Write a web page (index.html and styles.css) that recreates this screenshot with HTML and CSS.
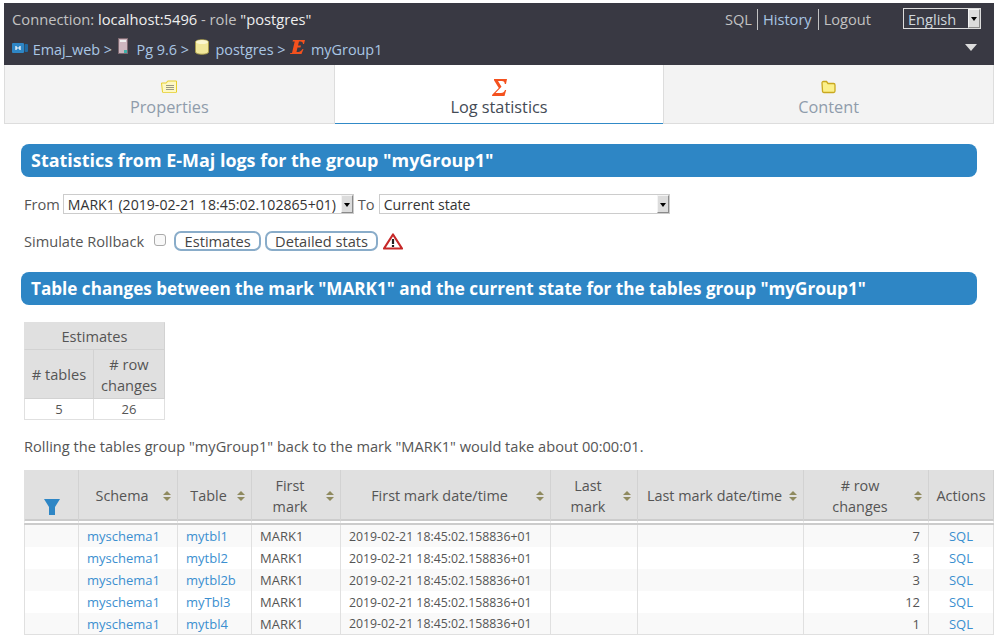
FILE: index.html
```html
<!doctype html>
<html>
    <head>
        <meta charset="utf-8" />
        <meta name="viewport" content="width=device-width, initial-scale=1" />
        <title>Emaj_web - Log statistics</title>
        <link rel="stylesheet" href="styles.css">
    </head>
    <body>
        <header class="topbar">
            <div class="topbar-row">
                <div class="connection">Connection: <span class="light">localhost:5496</span> - role <span class="light">"postgres"</span></div>
                <nav class="toplinks">
                    <a href="#">SQL</a>
                    <a href="#" class="blue">History</a>
                    <a href="#">Logout</a>
                </nav>
                <div class="select lang">
                    <select><option>English</option></select>
                    <span class="arrow"></span>
                </div>
            </div>
            <div class="crumbs">
                <svg class="cam" width="16" height="10" viewBox="0 0 16 10">
                    <rect x="0" y="0" width="12" height="10" rx="1" fill="#2e86c5" />
                    <rect x="12.500" y="1" width="3.500" height="8" rx="1" fill="#1f6aa3" />
                    <path d="M4 3v4M8 3v4M4.500 5h3" stroke="#fff" stroke-width="1.200" fill="none" />
                </svg>
                <a href="#">Emaj_web</a> &gt;
                <svg class="srv" width="11" height="17" viewBox="0 0 11 17">
                    <rect x="0.500" y="0.500" width="9" height="15" fill="#cdb6bf" stroke="#7d6870" />
                    <rect x="2" y="2" width="6" height="2" fill="#eee" />
                    <rect x="6" y="12" width="3" height="3" fill="#3fb0a8" />
                </svg>
                <a href="#">Pg 9.6</a> &gt;
                <svg class="db" width="14" height="16" viewBox="0 0 14 16">
                    <path d="M0.500 3c0-3 13-3 13 0v10c0 3-13 3-13 0z" fill="#f1e79a" stroke="#a69a4c" />
                    <ellipse cx="7" cy="3" rx="6" ry="2" fill="#fbf6cf" />
                </svg>
                <a href="#">postgres</a> &gt;
                <svg class="emaj" width="15" height="14" viewBox="0 0 15 14">
                    <path d="M3 0h12l-1 4h-1c0-2-1-2.500-4-2.500l-1 4h3l-.5 2h-3l-1 4.500c3 0 4.500-.5 6-3h1l-2 5H0l.3-1h1.700l2.700-11.500H2.500z" fill="#f4511e" />
                </svg>
                <a href="#">myGroup1</a>
                <span class="collapse"></span>
            </div>
        </header>

        <div class="tabs">
            <a href="#" class="tab">
                <svg width="16" height="13" viewBox="0 0 16 13">
                    <path d="M0.500 2.500h5l1-2h9v11l-1 1-1-1-1 1-1-1-1 1-1-1-1 1-1-1-1 1-1-1-1 1-1-1-1 1-1-1z" fill="#fdf8c4" stroke="#e6cf2a" />
                    <path d="M5 5h8M5 7h8M5 9h8" stroke="#9b9a84" />
                </svg>
                <span>Properties</span>
            </a>
            <a href="#" class="tab active">
                <svg width="15" height="17" viewBox="0 0 15 17">
                    <path d="M2 0h13l-1 5h-1.200c-.1-2-1-3-3-3H6l3.500 5.800L3.500 14H9c2 0 3.300-1 4-3h1.200L12.500 17H0l.2-1.200L6.800 9 2 1.200z" fill="#f4511e" />
                </svg>
                <span>Log statistics</span>
            </a>
            <a href="#" class="tab">
                <svg width="15" height="13" viewBox="0 0 15 13">
                    <path d="M1 2.500c0-1 .5-1.500 1.500-1.500h3l1.500 2h5.500c1 0 1.500.5 1.500 1.500v6c0 1-.5 1.500-1.500 1.500h-9.500c-1 0-1.500-.5-1.500-1.500z" fill="#fbf08a" stroke="#c9a81f" stroke-width="1.300" />
                </svg>
                <span>Content</span>
            </a>
        </div>

        <main class="content">
            <h2 class="title first-title">Statistics from E-Maj logs for the group "myGroup1"</h2>

            <form class="filters">
                <div class="filter-row">
                    <label>From</label>
                    <div class="select from">
                        <select><option>MARK1 (2019-02-21 18:45:02.102865+01)</option></select>
                        <span class="arrow"></span>
                    </div>
                    <label>To</label>
                    <div class="select to">
                        <select><option>Current state</option></select>
                        <span class="arrow"></span>
                    </div>
                </div>
                <div class="filter-row second">
                    <label>Simulate Rollback</label>
                    <input type="checkbox" class="check" />
                    <button type="button" class="btn estimate-btn">Estimates</button>
                    <button type="button" class="btn">Detailed stats</button>
                    <svg class="warn" width="20" height="17" viewBox="0 0 20 17">
                        <path d="M10 1.500L1 15.500h18z" fill="#fff" stroke="#c62828" stroke-width="2.200" stroke-linejoin="round" />
                        <path d="M10 6v5" stroke="#222" stroke-width="2.200" />
                        <rect x="8.900" y="12" width="2.200" height="2" fill="#222" />
                    </svg>
                </div>
            </form>

            <h2 class="title second-title">Table changes between the mark "MARK1" and the current state for the tables group "myGroup1"</h2>

            <table class="grid estimates">
                <thead>
                    <tr><th colspan="2" class="est-head">Estimates</th></tr>
                    <tr><th class="c-tables"># tables</th><th class="c-rows"># row changes</th></tr>
                </thead>
                <tbody>
                    <tr><td class="center">5</td><td class="center">26</td></tr>
                </tbody>
            </table>

            <p class="duration">Rolling the tables group "myGroup1" back to the mark "MARK1" would take about 00:00:01.</p>

            <table class="grid stats">
                <colgroup>
                    <col class="col-filter">
                    <col class="col-schema">
                    <col class="col-table">
                    <col class="col-mark">
                    <col class="col-date">
                    <col class="col-last">
                    <col class="col-lastdate">
                    <col class="col-changes">
                    <col class="col-actions">
                </colgroup>
                <thead>
                    <tr>
                        <th class="filter-cell">
                            <svg width="16" height="16" viewBox="0 0 16 16"><path d="M0 0h16l-5 8v8H5V8z" fill="#2e86c5" /></svg>
                        </th>
                        <th class="sort">Schema</th>
                        <th class="sort">Table</th>
                        <th class="sort">First<br>mark</th>
                        <th class="sort">First mark date/time</th>
                        <th class="sort">Last<br>mark</th>
                        <th class="sort">Last mark date/time</th>
                        <th class="sort"># row<br>changes</th>
                        <th>Actions</th>
                    </tr>
                </thead>
                <tbody>
                    <tr><td></td><td><a href="#">myschema1</a></td><td><a href="#">mytbl1</a></td><td>MARK1</td><td class="date">2019-02-21 18:45:02.158836+01</td><td></td><td></td><td class="num">7</td><td class="center"><a href="#">SQL</a></td></tr>
                    <tr><td></td><td><a href="#">myschema1</a></td><td><a href="#">mytbl2</a></td><td>MARK1</td><td class="date">2019-02-21 18:45:02.158836+01</td><td></td><td></td><td class="num">3</td><td class="center"><a href="#">SQL</a></td></tr>
                    <tr><td></td><td><a href="#">myschema1</a></td><td><a href="#">mytbl2b</a></td><td>MARK1</td><td class="date">2019-02-21 18:45:02.158836+01</td><td></td><td></td><td class="num">3</td><td class="center"><a href="#">SQL</a></td></tr>
                    <tr><td></td><td><a href="#">myschema1</a></td><td><a href="#">myTbl3</a></td><td>MARK1</td><td class="date">2019-02-21 18:45:02.158836+01</td><td></td><td></td><td class="num">12</td><td class="center"><a href="#">SQL</a></td></tr>
                    <tr><td></td><td><a href="#">myschema1</a></td><td><a href="#">mytbl4</a></td><td>MARK1</td><td class="date">2019-02-21 18:45:02.158836+01</td><td></td><td></td><td class="num">1</td><td class="center"><a href="#">SQL</a></td></tr>
                </tbody>
            </table>
        </main>
    </body>
</html>
```

FILE: styles.css
```css
html {
    font-family: "Open Sans", "Liberation Sans", sans-serif;
    font-size: 14.62px;
    color: #555;
}

body {
    margin: 3px 4px 0;
    overflow: hidden;
}

a {
    color: #3b8fd0;
    text-decoration: none;
}

/* top bar */
.topbar {
    background: #393943;
    height: 62px;
    color: #c2c2c2;
    padding: 4px 13px 0 8px;
    box-sizing: border-box;
}

.topbar-row {
    display: flex;
    align-items: center;
    height: 24px;
}

.light {
    color: #eee;
}

.connection {
    flex: 1;
    font-size: 14.72px;
}

.toplinks {
    display: flex;
    margin-right: 26px;
}

.toplinks a {
    color: #c2c2c2;
    padding: 0 6px 0 5px;
    line-height: 21px;
    border-left: 1px solid #c2c2c2;
}

.toplinks a:first-child {
    border-left: none;
    padding-right: 5px;
}

.toplinks a.blue {
    color: #a9c6e4;
}

.crumbs {
    position: relative;
    margin-top: 7px;
    line-height: 24px;
    font-size: 14.4px;
    color: #a9c6e4;
    white-space: nowrap;
}

.crumbs a {
    color: #a9c6e4;
}

.crumbs svg {
    margin: 0 2px;
}

.crumbs .cam {
    margin-left: 0;
    margin-right: 1px;
    vertical-align: 2px;
}

.crumbs .srv {
    margin-right: 4px;
    vertical-align: 0;
}

.crumbs .db {
    margin-right: 3px;
}

.crumbs .emaj {
    margin-left: 1px;
    vertical-align: 1px;
}

.collapse {
    position: absolute;
    top: 6px;
    right: 4px;
    border-left: 6px solid transparent;
    border-right: 6px solid transparent;
    border-top: 7px solid #ddd;
}

/* selects are redrawn with a small 3d arrow button */
.select {
    position: relative;
    display: inline-block;
}

.select select {
    appearance: none;
    -webkit-appearance: none;
    display: block;
    width: 100%;
    height: 20px;
    box-sizing: border-box;
    border: 1px solid #ccc;
    border-radius: 0;
    background: #fff;
    padding: 0 0 0 4px;
    font: inherit;
    font-size: 14.1px;
    color: #333;
}

.arrow {
    position: absolute;
    top: 1px;
    right: 1px;
    bottom: 1px;
    width: 10px;
    background: #dcdcdc;
    border: 1px solid;
    border-color: #f4f4f4 #8a8a8a #8a8a8a #f4f4f4;
}

.arrow::after {
    content: "";
    position: absolute;
    top: 7px;
    left: 2px;
    border-left: 3px solid transparent;
    border-right: 3px solid transparent;
    border-top: 4px solid #000;
}

.lang {
    width: 78px;
    margin-top: -2px;
}

.lang select {
    height: 21px;
    background: #393943;
    color: #cfd6dc;
    border-color: #ddd;
    font-size: 14.6px;
}

/* tabs */
.tabs {
    display: flex;
    height: 59px;
}

.tab {
    flex: 1;
    display: flex;
    flex-direction: column;
    align-items: center;
    padding-top: 15px;
    box-sizing: border-box;
    background: #f3f3f3;
    color: #8f9cab;
    font-size: 16.3px;
    border: 1px solid #ddd;
    border-top: none;
}

.tab span {
    line-height: 24px;
    margin-top: 1px;
}

.tab svg {
    height: 14px;
}

.tab.active svg {
    height: 17px;
    margin-bottom: -2px;
    margin-top: -1px;
}

.tab.active {
    background: #fff;
    color: #444b55;
    border-left: none;
    border-right: none;
    border-bottom: 1px solid #318ac7;
}

/* page content */
.content {
    padding: 20px 17px 0;
}

.title {
    margin: 0;
    background: #2e86c5;
    color: #fff;
    border-radius: 8px;
    font-size: 17.12px;
    line-height: 33px;
    height: 33px;
    padding-left: 10px;
}

.first-title {
    font-size: 17.96px;
}

.second-title {
    margin-top: 21px;
}

.filters {
    padding: 17px 3px 0;
}

.filter-row {
    display: flex;
    align-items: center;
    height: 20px;
    gap: 4px;
}

.filter-row.second {
    margin-top: 17px;
}

.from {
    width: 291px;
    margin-left: -1px;
}

.to {
    width: 291px;
}

.check {
    appearance: none;
    -webkit-appearance: none;
    box-sizing: border-box;
    margin: 0 4px 2px 6px;
    width: 12px;
    height: 12px;
    border: 1px solid #aaa;
    border-radius: 3px;
    background: #f8f8f8;
}

.btn {
    font: inherit;
    color: #444;
    background: #fff;
    border: 2px solid #89acc9;
    border-radius: 7px;
    height: 20px;
    padding: 0 8px;
    line-height: 15px;
}

.estimate-btn {
    width: 87px;
}

.warn {
    margin-left: 1px;
}

/* tables */
.grid {
    border-collapse: separate;
    border-spacing: 0;
    margin-left: 3px;
}

.grid th {
    background: #e0e0e0;
    font-weight: normal;
    color: #555;
    border: 1px solid #d2d2d2;
    border-width: 0 1px 1px 0;
    padding: 0 7px;
    line-height: 21px;
}

.grid td {
    border-right: 1px solid #e0e0e0;
    border-bottom: 1px solid #e0e0e0;
    height: 22px;
    box-sizing: border-box;
    padding: 0 8px;
    font-size: 13px;
    color: #555;
    white-space: nowrap;
    line-height: 18px;
}

.grid td.date {
    font-size: 12.3px;
    padding-top: 1px;
}

.grid tr > :first-child {
    border-left: 1px solid #e0e0e0;
}

.center {
    text-align: center;
}

.num {
    text-align: right;
}

.estimates {
    margin-top: 17px;
}

.estimates th {
    padding: 0;
}

.estimates th.est-head {
    height: 28px;
    box-sizing: border-box;
    border-top: 1px solid #e0e0e0;
}

.c-tables {
    width: 68px;
}

.estimates th.c-rows {
    width: 71px;
    height: 49px;
    box-sizing: border-box;
    padding: 4px 0 2px;
}

.estimates td {
    height: 21px;
    padding: 0;
}

.duration {
    margin: 16px 0 14px 3px;
    line-height: 20px;
}

.stats {
    table-layout: fixed;
    width: 970px;
}

.col-filter { width: 55px; }
.col-schema { width: 99px; }
.col-table { width: 74px; }
.col-mark { width: 89px; }
.col-date { width: 210px; }
.col-last { width: 87px; }
.col-lastdate { width: 166px; }
.col-changes { width: 125px; }
.col-actions { width: 65px; }

.stats th {
    box-sizing: border-box;
    border-bottom: 6px double #ccc;
    background-clip: padding-box;
    height: 55px;
    font-size: 14.4px;
    padding: 2px 2px 0;
}

.stats tbody tr:nth-child(odd) td {
    background: #f9f9f9;
}

.stats tbody tr td {
    border-bottom: none;
}

.stats tbody tr:last-child td {
    border-bottom: 1px solid #e0e0e0;
}

.stats th.sort {
    position: relative;
    padding-right: 14px;
}

/* sort handle, stacked up and down triangles */
.sort::before,
.sort::after {
    content: "";
    position: absolute;
    right: 6px;
    border-left: 4px solid transparent;
    border-right: 4px solid transparent;
}

.sort::before {
    top: 21px;
    border-bottom: 4px solid #8f8a5f;
}

.sort::after {
    top: 27px;
    border-top: 4px solid #8f8a5f;
}

.filter-cell {
    vertical-align: bottom;
}

.filter-cell svg {
    display: block;
    margin: 0 auto 4px;
}
```
